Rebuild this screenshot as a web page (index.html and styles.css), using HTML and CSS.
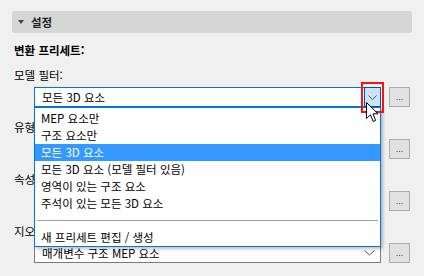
FILE: index.html
```html
<!DOCTYPE html>
<html lang="ko">
<head>
  <meta charset="UTF-8">
  <title>설정</title>
  <link rel="stylesheet" href="styles.css">
</head>
<body>
  <div class="panel">
    <div class="section-head">
      <span class="caret"></span>
      <span class="section-title">설정</span>
    </div>

    <div class="preset-title">변환 프리세트:</div>

    <div class="field">
      <div class="field-label">모델 필터:</div>
      <div class="field-row">
        <div class="combo combo-open">
          <span class="combo-text">모든 3D 요소</span>
          <span class="drop-btn">
            <svg width="9" height="5" viewBox="0 0 9 5"><path d="M0.5 0.5 L4.5 4.5 L8.5 0.5" fill="none" stroke="#555" stroke-width="1"/></svg>
          </span>
        </div>
        <button class="more-btn">...</button>
      </div>
    </div>

    <div class="field">
      <div class="field-label">유형</div>
      <div class="field-row">
        <div class="combo"><span class="combo-text"></span></div>
        <button class="more-btn">...</button>
      </div>
    </div>

    <div class="field">
      <div class="field-label">속성</div>
      <div class="field-row">
        <div class="combo"><span class="combo-text"></span></div>
        <button class="more-btn">...</button>
      </div>
    </div>

    <div class="field">
      <div class="field-label">지오</div>
      <div class="field-row">
        <div class="combo">
          <span class="combo-text">매개변수 구조 MEP 요소</span>
          <span class="chevron">
            <svg width="11" height="6" viewBox="0 0 11 6"><path d="M0.5 0.5 L5.5 5 L10.5 0.5" fill="none" stroke="#555" stroke-width="1"/></svg>
          </span>
        </div>
        <button class="more-btn">...</button>
      </div>
    </div>
  </div>

  <ul class="dropdown-list">
    <li>MEP 요소만</li>
    <li>구조 요소만</li>
    <li class="selected">모든 3D 요소</li>
    <li>모든 3D 요소 (모델 필터 있음)</li>
    <li>영역이 있는 구조 요소</li>
    <li>주석이 있는 모든 3D 요소</li>
    <li class="separator"><span></span></li>
    <li>새 프리세트 편집 / 생성</li>
  </ul>

  <div class="highlight-box"></div>

  <svg class="cursor" width="13" height="21" viewBox="0 0 13 21">
    <path d="M0.5 0.5 L0.5 16.5 L4.5 12.8 L7.2 19.5 L9.6 18.5 L7 11.8 L12 11.8 Z" fill="#fff" stroke="#000" stroke-width="1" stroke-linejoin="miter"/>
  </svg>
</body>
</html>
```

FILE: styles.css
```css
body {
  margin: 0;
  background: #f0f0f0;
  font-family: "Noto Sans CJK KR", "Noto Sans", sans-serif;
  font-size: 11.5px;
  color: #000;
  width: 424px;
  height: 276px;
  overflow: hidden;
}
.panel {
  padding: 11px 12px 0 12px;
}
.section-head {
  height: 22px;
  background: #d6d6d6;
  border-radius: 3px;
  display: flex;
  align-items: center;
  padding-left: 6px;
}
.caret {
  width: 0;
  height: 0;
  border-left: 3.5px solid transparent;
  border-right: 3.5px solid transparent;
  border-top: 4px solid #444;
  margin-right: 7px;
}
.section-title {
  font-weight: bold;
  color: #222;
}
.preset-title {
  margin-top: 9px;
  padding-left: 2px;
  height: 16px;
  line-height: 16px;
  font-weight: bold;
}
.field {
  margin-top: 9px;
}
.field + .field {
  margin-top: 12px;
}
.field-label {
  padding-left: 2px;
  height: 16px;
  line-height: 16px;
}
.field-row {
  margin-top: 4px;
  padding-left: 22px;
  display: flex;
  align-items: center;
  gap: 8px;
}
.combo {
  box-sizing: border-box;
  width: 347px;
  height: 20px;
  background: #fff;
  border: 1px solid #7a7a7a;
  display: flex;
  align-items: center;
  padding-left: 7px;
}
.combo-open {
  border-color: #0078d7;
  padding-right: 0;
}
.combo-text {
  flex: 1;
  line-height: 16px;
}
.drop-btn {
  box-sizing: border-box;
  width: 17px;
  height: 20px;
  margin: -1px -1px -1px 0;
  background: #cce4f7;
  border: 1px solid #005499;
  display: flex;
  align-items: center;
  justify-content: center;
}
.chevron {
  width: 17px;
  display: flex;
  justify-content: center;
  margin-right: 2px;
}
.more-btn {
  box-sizing: border-box;
  width: 21px;
  height: 20px;
  padding: 0;
  background: #e1e1e1;
  border: 1px solid #adadad;
  font-family: "Liberation Sans", sans-serif;
  font-size: 9px;
  line-height: 14px;
  color: #333;
}
.dropdown-list {
  position: absolute;
  left: 34px;
  top: 107px;
  box-sizing: border-box;
  width: 347px;
  height: 140px;
  margin: 0;
  padding: 2px 0 0 0;
  list-style: none;
  background: #fff;
  border: 1px solid #0078d7;
  box-shadow: 2px 2px 3px rgba(0, 0, 0, 0.25);
}
.dropdown-list li {
  height: 17px;
  line-height: 17px;
  padding-left: 6px;
}
.dropdown-list li.selected {
  background: #3399ff;
  color: #fff;
}
.dropdown-list li.separator {
  padding: 0 2px;
  display: flex;
  align-items: center;
}
.separator span {
  flex: 1;
  height: 1px;
  background: #a0a0a0;
}
.highlight-box {
  position: absolute;
  left: 361px;
  top: 82px;
  width: 19px;
  height: 27px;
  border: 2px solid #ff1010;
}
.cursor {
  position: absolute;
  left: 366px;
  top: 102px;
}
```
